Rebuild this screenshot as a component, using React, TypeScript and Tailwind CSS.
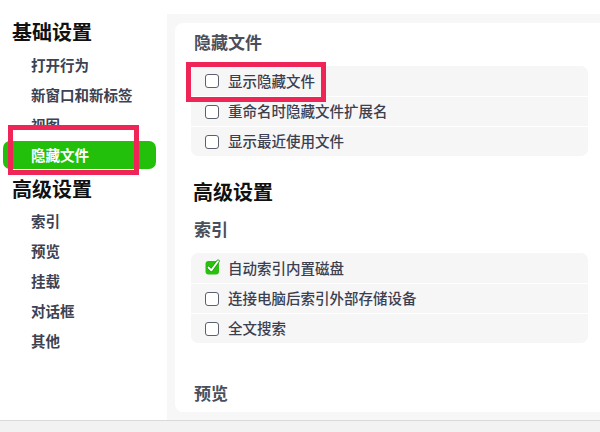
import React from "react"

const basic = ["打开行为", "新窗口和新标签", "视图", "隐藏文件"]
const advanced = ["索引", "预览", "挂载", "对话框", "其他"]

const hiddenRows = [
  { label: "显示隐藏文件", checked: false },
  { label: "重命名时隐藏文件扩展名", checked: false },
  { label: "显示最近使用文件", checked: false },
]

const indexRows = [
  { label: "自动索引内置磁盘", checked: true },
  { label: "连接电脑后索引外部存储设备", checked: false },
  { label: "全文搜索", checked: false },
]

function Box({ checked }: { checked: boolean }) {
  if (checked) {
    return (
      <svg width="16" height="16" viewBox="0 0 16 16" className="shrink-0 -mt-[2px] -mr-[2px]">
        <rect x="0.5" y="2" width="13.5" height="13.5" rx="3" fill="#27c10e" />
        <path d="M3.5 8.5 L6.3 11.4 L13 2.2" fill="none" stroke="#1f9e0b" strokeWidth="3.4" strokeLinecap="round" strokeLinejoin="round" />
        <path d="M3.5 8.5 L6.3 11.4 L13 2.2" fill="none" stroke="#ffffff" strokeWidth="1.8" strokeLinecap="round" strokeLinejoin="round" />
      </svg>
    )
  }
  return <span className="w-[14px] h-[14px] shrink-0 rounded-[3px] border-[1.5px] border-[#5a6070] bg-white" />
}

function Rows({ rows }: { rows: { label: string; checked: boolean }[] }) {
  return (
    <div className="w-[397px] rounded-[7px] bg-[#f6f6f7] overflow-hidden">
      {rows.map((r, i) => (
        <div
          key={r.label}
          className={"h-[30px] flex items-center gap-[9px] pl-[14px] " + (i > 0 ? "border-t border-white" : "")}
        >
          <Box checked={r.checked} />
          <span className="text-[14.5px] font-medium text-[#3b4050] leading-none">{r.label}</span>
        </div>
      ))}
    </div>
  )
}

function NavItem({ label, active }: { label: string; active?: boolean }) {
  if (active) {
    return (
      <div className="h-[30px] flex items-center">
        <div className="mx-[3px] w-[153px] h-[28px] rounded-[7px] bg-[#22c00b] flex items-center pl-[28px] text-[14.5px] font-semibold text-white">
          {label}
        </div>
      </div>
    )
  }
  return (
    <div className="h-[30px] flex items-center pl-[31px] text-[14.5px] font-semibold text-[#3c4252]">{label}</div>
  )
}

export default function App() {
  return (
    <div
      className="w-[600px] h-[432px] flex flex-col bg-white overflow-hidden relative"
      style={{ fontFamily: '"Noto Sans CJK SC", "Noto Sans", sans-serif' }}
    >
      <div className="flex flex-1 min-h-0">
        {/* sidebar */}
        <div className="w-[167px] shrink-0 bg-white relative">
          <div className="mt-[18px] h-[28px] flex items-center pl-[12px] text-[20px] font-bold text-[#111]">基础设置</div>
          <div className="mt-[4px]">
            {basic.map((l) => (
              <NavItem key={l} label={l} active={l === "隐藏文件"} />
            ))}
          </div>
          <div className="mt-[5px] h-[28px] flex items-center pl-[12px] text-[20px] font-bold text-[#111]">高级设置</div>
          <div className="mt-[3px]">
            {advanced.map((l) => (
              <NavItem key={l} label={l} />
            ))}
          </div>
          {/* annotation */}
          <div className="absolute left-[8px] top-[125px] w-[131px] h-[50px] border-[5px] border-[#ef2558]">
            <div className="h-[11px] bg-white" />
          </div>
        </div>

        {/* content */}
        <div className="flex-1 pt-[14px] bg-white">
          <div className="h-full bg-[#f7f7f7] pl-[8px] pt-[9px] pb-[8px]">
            <div className="h-full bg-white rounded-l-[8px] pl-[16px] pt-[7px] overflow-hidden relative">
              <div className="h-[24px] flex items-center pl-[3px] text-[17px] font-semibold text-[#4a4f5b]">隐藏文件</div>
              <div className="mt-[12px]">
                <Rows rows={hiddenRows} />
              </div>
              <div className="mt-[22px] h-[28px] flex items-center pl-[2px] text-[20px] font-bold text-[#111]">高级设置</div>
              <div className="mt-[11px] h-[24px] flex items-center pl-[3px] text-[17px] font-semibold text-[#4a4f5b]">索引</div>
              <div className="mt-[12px]">
                <Rows rows={indexRows} />
              </div>
              <div className="mt-[38px] h-[24px] flex items-center pl-[3px] text-[17px] font-semibold text-[#4a4f5b]">预览</div>
              {/* annotation */}
              <div className="absolute left-[11px] top-[39px] w-[140px] h-[40px] border-[5px] border-[#ef2558]" />
            </div>
          </div>
        </div>
      </div>
      <div className="h-[12px] shrink-0 border-t border-[#d9d9d9] bg-[#f2f2f2]" />
    </div>
  )
}
